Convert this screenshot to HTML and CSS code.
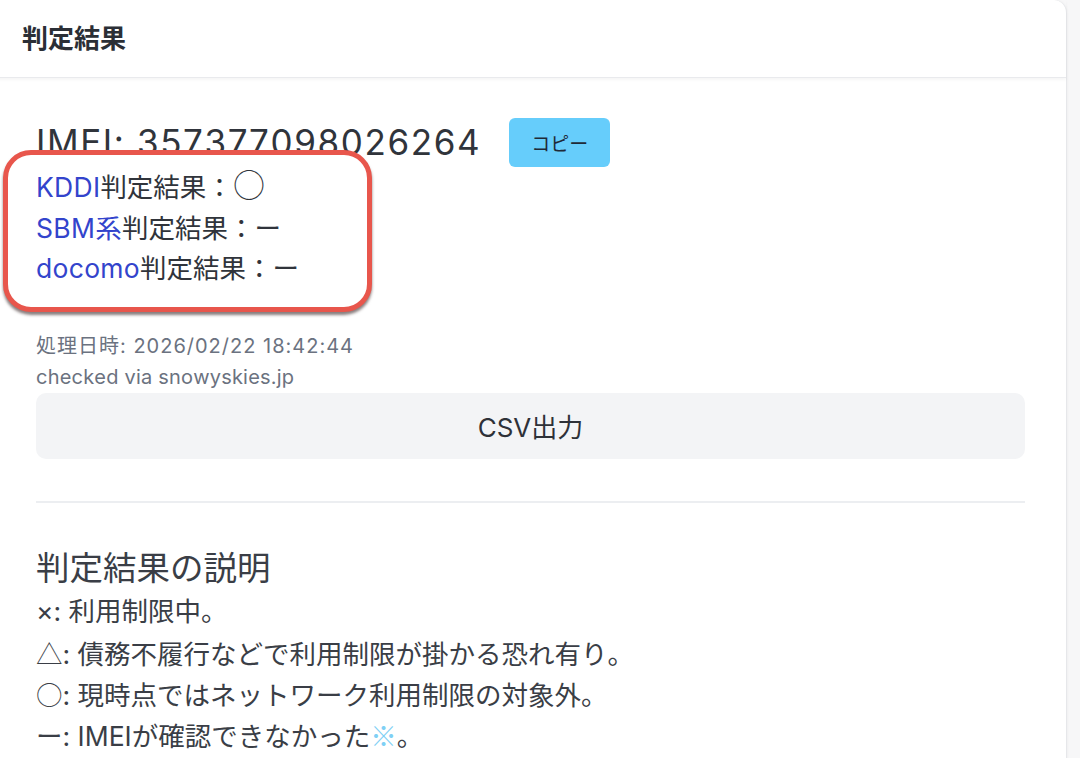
FILE: index.html
```html
<!DOCTYPE html>
<html lang="ja">
<head>
<meta charset="utf-8">
<title>判定結果</title>
<link rel="stylesheet" href="styles.css">
</head>
<body>
<div class="page">
  <section class="card">
    <header class="card-header">判定結果</header>
    <div class="card-body">
      <div class="imei-row">
        <h2 class="imei">IMEI: 357377098026264</h2>
        <button class="copy-btn" type="button">コピー</button>
      </div>
      <div class="results">
        <p class="result"><span class="carrier">KDDI</span>判定結果：<span class="mark">○</span></p>
        <p class="result"><span class="carrier">SBM系</span>判定結果：ー</p>
        <p class="result"><span class="carrier">docomo</span>判定結果：ー</p>
      </div>
      <div class="meta">
        <p class="date">処理日時: 2026/02/22 18:42:44</p>
        <p>checked via snowyskies.jp</p>
      </div>
      <button class="csv-btn" type="button">CSV出力</button>
      <hr class="divider">
      <h3 class="legend-title">判定結果の説明</h3>
      <ul class="legend">
        <li>×: 利用制限中。</li>
        <li><span class="sym">△</span>: 債務不履行などで利用制限が掛かる恐れ有り。</li>
        <li><span class="sym">○</span>: 現時点ではネットワーク利用制限の対象外。</li>
        <li>ー: IMEIが確認できなかった<span class="note">※</span>。</li>
      </ul>
    </div>
  </section>
</div>
</body>
</html>
```
FILE: styles.css
```css
* { box-sizing: border-box; }
html, body {
  margin: 0;
  padding: 0;
  background: #f7f7f8;
  overflow: hidden;
}
body {
  font-family: "Inter", "Noto Sans CJK JP", sans-serif;
  font-kerning: none;
  color: #3a3e46;
}
.page {
  width: 1080px;
  height: 758px;
  overflow: hidden;
}
.card {
  margin-left: -5px;
  width: 1072px;
  min-height: 800px;
  background: #fff;
  border: 1px solid #e6e7ea;
  border-left: none;
  border-top: none;
  border-top-right-radius: 13px;
  box-shadow: 0 0 3px rgba(0,0,0,0.06);
}
.card-header {
  height: 78px;
  display: flex;
  align-items: center;
  padding-left: 27px;
  padding-bottom: 4px;
  font-family: "Noto Sans CJK JP", sans-serif;
  font-size: 26px;
  font-weight: 700;
  color: #2b2f36;
  border-bottom: 1px solid #e9eaed;
  box-shadow: 0 2px 3px rgba(0,0,0,0.04);
}
.card-body {
  padding: 40px 41px 0 41px;
}
.imei-row {
  display: flex;
  align-items: center;
  gap: 28px;
  height: 49px;
}
.imei {
  margin: 0;
  font-size: 35px;
  font-weight: 400;
  letter-spacing: 1.6px;
  color: #30343b;
  line-height: 1;
}
.copy-btn {
  width: 101px;
  height: 49px;
  border: none;
  border-radius: 6px;
  background: #66cdfb;
  color: #1f2a37;
  font-family: "Noto Sans CJK JP", sans-serif;
  font-size: 19px;
  padding: 0;
}
.results {
  position: relative;
}
.results::before {
  content: "";
  position: absolute;
  left: -33px;
  top: -17px;
  width: 359px;
  height: 152px;
  background: #fff;
  border: 5px solid #e8564c;
  border-radius: 28px;
  box-shadow: 0 3px 3px rgba(40,20,20,0.55);
}
.result {
  position: relative;
  margin: 0;
  height: 40.5px;
  line-height: 40.5px;
  font-size: 26.5px;
  color: #30343b;
}
.carrier {
  color: #3344cc;
  letter-spacing: 0.3px;
}
.mark {
  font-family: "Noto Sans CJK JP", sans-serif;
  font-size: 32px;
  font-weight: 300;
  line-height: 1;
}
.meta {
  margin-top: 42px;
  color: #6b7280;
  font-size: 20px;
  letter-spacing: 0.2px;
}
.meta p {
  margin: 0;
  height: 31px;
  line-height: 31px;
}
.meta .date {
  letter-spacing: 1px;
}
.csv-btn {
  display: block;
  width: 100%;
  height: 66px;
  border: none;
  border-radius: 10px;
  background: #f3f4f6;
  color: #2e3138;
  font-family: "Inter", "Noto Sans CJK JP", sans-serif;
  font-size: 26px;
  padding: 0;
}
.divider {
  margin: 42px 0 0;
  border: none;
  height: 2px;
  background: #eceef1;
}
.legend-title {
  margin: 43px 0 0;
  font-size: 33.5px;
  font-weight: 400;
  line-height: 45px;
  color: #3a3e46;
}
.legend {
  list-style: none;
  margin: 0;
  padding: 0;
  font-size: 26.5px;
  color: #3a3e46;
}
.legend li {
  height: 41px;
  line-height: 41px;
}
.sym {
  font-family: "Noto Sans CJK JP", sans-serif;
  font-weight: 300;
}
.note {
  font-family: "Noto Sans CJK JP", sans-serif;
  color: #7fd0f5;
}
```
